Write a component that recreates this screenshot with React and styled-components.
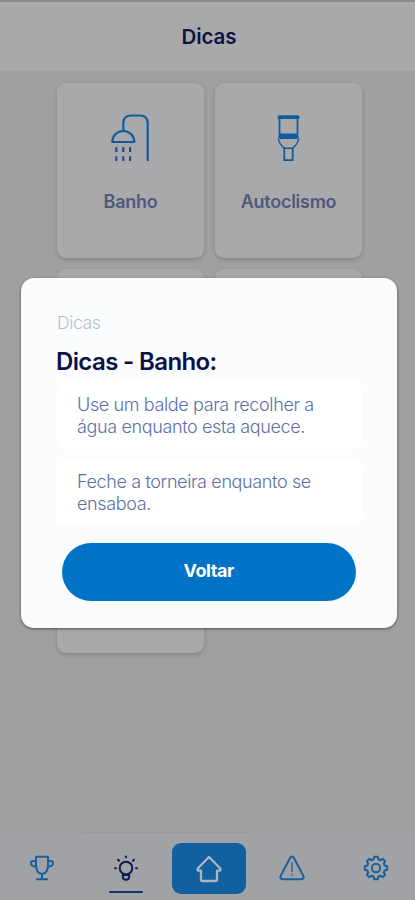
import React from "react";
import styled, { createGlobalStyle } from "styled-components";

const GlobalStyle = createGlobalStyle`
  * { box-sizing: border-box; }
  body { margin: 0; background: #a0a0a2; }
  button { font: inherit; border: 0; padding: 0; background: none; }
`;

const Screen = styled.div`
  position: relative;
  display: flex;
  flex-direction: column;
  width: 415px;
  height: 900px;
  overflow: hidden;
  background: #a0a0a2;
  font-family: Inter, "Liberation Sans", sans-serif;
`;

const Header = styled.header`
  display: flex;
  align-items: center;
  justify-content: center;
  height: 71px;
  flex: none;
  background: #a9a9ab;
  border-top: 2px solid #89898a;
  padding-left: 3px;
`;

const HeaderTitle = styled.h1`
  margin: 0;
  font-size: 20.5px;
  line-height: 24px;
  font-weight: 600;
  letter-spacing: -0.1px;
  color: #0b1445;
`;

const Grid = styled.main`
  flex: 1;
  display: grid;
  grid-template-columns: 147px 147px;
  grid-template-rows: 175px 175px 198px;
  gap: 11px;
  padding: 12px 0 0 57px;
`;

const Card = styled.section`
  display: flex;
  flex-direction: column;
  align-items: center;
  border-radius: 9px;
  background: #a9a9ab;
  box-shadow: 0 2px 4px rgba(0, 0, 0, 0.18);
  padding-top: 28px;
`;

const CardLabel = styled.span`
  margin-top: 27px;
  font-size: 18px;
  line-height: 28px;
  font-weight: 600;
  letter-spacing: -0.27px;
  color: #50587d;
`;

const Nav = styled.nav`
  position: relative;
  display: grid;
  grid-template-columns: repeat(5, 83.4px);
  height: 67px;
  flex: none;
  padding-left: 0.6px;
  background: #a1a2a6;
`;

const NavRule = styled.div`
  position: absolute;
  top: -1px;
  left: 83px;
  width: 164px;
  height: 1px;
  background: #9a9a9e;
`;

const NavItem = styled.button`
  display: flex;
  flex-direction: column;
  align-items: center;
  padding-top: ${(p) => (p.$home ? "10px" : "21.5px")};
`;

const ActiveBar = styled.div`
  width: 34px;
  height: 2px;
  margin-top: 10.5px;
  border-radius: 1px;
  background: #123766;
`;

const HomeTile = styled.span`
  display: flex;
  align-items: center;
  justify-content: center;
  width: 74px;
  height: 51px;
  border-radius: 9px;
  background: #12609f;
`;

const Dialog = styled.div`
  position: absolute;
  left: 21px;
  top: 278px;
  width: 376px;
  height: 350px;
  display: flex;
  flex-direction: column;
  padding: 34px 35px 0 36px;
  border-radius: 13px;
  background: #fafcfe;
  box-shadow: 0 1px 3px rgba(0, 0, 0, 0.5);
`;

const Eyebrow = styled.div`
  font-size: 17.8px;
  line-height: 22px;
  font-weight: 300;
  letter-spacing: -0.5px;
  color: #b8bdd1;
`;

const DialogTitle = styled.h2`
  margin: 12px 0 5px -1px;
  font-size: 24px;
  line-height: 31px;
  height: 30px;
  font-weight: 600;
  letter-spacing: -0.62px;
  color: #0b1045;
`;

const Tips = styled.div`
  display: flex;
  flex-direction: column;
  gap: 11px;
`;

const Tip = styled.p`
  margin: 0;
  height: ${(p) => p.$height};
  padding: ${(p) => p.$top} 0 0 20px;
  border-radius: 9px;
  background: #ffffff;
  font-size: 18px;
  line-height: 22px;
  font-weight: 300;
  letter-spacing: -0.37px;
  color: #5c70a6;
  white-space: nowrap;
`;

const BackButton = styled.button`
  && {
    margin: 17px 6px 0 4.5px;
    height: 57.5px;
    flex: none;
    border-radius: 29px;
    background: #0173c6;
    color: #ffffff;
    font-size: 18px;
    line-height: 22px;
    padding-bottom: 1px;
    font-weight: 700;
    letter-spacing: -0.4px;
  }
`;

const Shower = () => (
  <svg width="40" height="50" viewBox="0 0 40 50" fill="none" stroke="#125c9c" strokeWidth="2.2">
    <path d="M12.3 19.5V12.5Q12.3 4.5 20.3 4.5H29Q36.7 4.5 36.7 12.5V50" />
    <path d="M1.3 31C1.3 24.5 6.3 20 12.3 20S23.3 24.5 23.3 31Z" strokeLinejoin="round" />
    <path d="M5.3 36V41M12.3 36V41M19.1 36V41M5.3 45.3V50M12.3 45.3V50M19.1 45.3V50" stroke="#204f89" />
  </svg>
);

const Toilet = () => (
  <svg width="24" height="50" viewBox="0 0 24 50" fill="none" stroke="#125c9c" strokeWidth="1.8">
    <rect x="0.5" y="4.2" width="22" height="3.8" rx="1.5" fill="#125c9c" stroke="none" />
    <path d="M2.5 7V23M20.5 7V23" />
    <path d="M2.5 22.5H20.5L22 25.5L20 28H3L1 25.5Z" fill="#125c9c" stroke="none" />
    <path d="M1.4 27C1.7 33 5.2 35.6 8.1 37.3H14.9C17.8 35.6 21.3 33 21.6 27" strokeWidth="1.4" />
    <path d="M7.3 37V49.2H15.7V37" />
  </svg>
);

const iconProps = {
  width: 26,
  height: 26,
  viewBox: "0 0 26 26",
  fill: "none",
  stroke: "#185f9d",
  strokeWidth: 2,
  strokeLinecap: "round",
  strokeLinejoin: "round",
};

const Trophy = () => (
  <svg {...iconProps}>
    <path d="M7 1.8H19V10.5C19 15.5 16.5 18.3 13 19C9.5 18.3 7 15.5 7 10.5ZM7 6H4Q2 6 2 8C2 10.4 4.4 11.6 7.5 11.6M19 6H22Q24 6 24 8C24 10.4 21.6 11.6 18.5 11.6M13 19V24M7.8 24.2H18.2" />
  </svg>
);

const Bulb = () => (
  <svg {...iconProps} stroke="#101c50">
    <circle cx="13" cy="13" r="6.3" />
    <path d="M9.8 19.2V21.8Q9.8 24.8 13 24.8T16.2 21.8V19.2M10.5 20H15.5M13 1.5V2.2M5 4.8L6 5.8M21 4.8L20 5.8M2 13.2H3M23 13.2H24" />
  </svg>
);

const Home = () => (
  <svg width="28" height="28" viewBox="0 0 28 28" fill="none" stroke="#aeb4be" strokeWidth="2.3" strokeLinejoin="round" strokeLinecap="round">
    <path d="M14 2L25.3 13.5V15.6H22V24.3Q22 26 20.3 26H7.7Q6 26 6 24.3V15.6H2.7V13.5Z" />
  </svg>
);

const Warning = () => (
  <svg {...iconProps}>
    <path d="M11.2 2.8Q13 .4 14.8 2.8L24.2 20.6Q25.5 24.2 22.5 24.2H3.5Q.5 24.2 1.8 20.6Z" />
    <path d="M13 8V16.2M13 19.7V20" stroke="#536f92" />
  </svg>
);

const Gear = () => (
  <svg {...iconProps}>
    <path d="M11.2 1.8H14.8L15.5 4.4L17.5 5.2L19.8 3.9L22.1 6.2L20.8 8.5L21.6 10.5L24.2 11.2V14.8L21.6 15.5L20.8 17.5L22.1 19.8L19.8 22.1L17.5 20.8L15.5 21.6L14.8 24.2H11.2L10.5 21.6L8.5 20.8L6.2 22.1L3.9 19.8L5.2 17.5L4.4 15.5L1.8 14.8V11.2L4.4 10.5L5.2 8.5L3.9 6.2L6.2 3.9L8.5 5.2L10.5 4.4Z" />
    <circle cx="13" cy="13" r="4.2" />
  </svg>
);

export default function App() {
  return (
    <>
      <GlobalStyle />
      <Screen>
        <Header>
          <HeaderTitle>Dicas</HeaderTitle>
        </Header>
        <Grid>
          <Card>
            <Shower />
            <CardLabel>Banho</CardLabel>
          </Card>
          <Card>
            <Toilet />
            <CardLabel>Autoclismo</CardLabel>
          </Card>
          <Card />
          <Card />
          <Card />
        </Grid>
        <Nav>
          <NavRule />
          <NavItem aria-label="Troféus"><Trophy /></NavItem>
          <NavItem aria-label="Dicas">
            <Bulb />
            <ActiveBar />
          </NavItem>
          <NavItem $home aria-label="Início">
            <HomeTile><Home /></HomeTile>
          </NavItem>
          <NavItem aria-label="Alertas"><Warning /></NavItem>
          <NavItem aria-label="Definições"><Gear /></NavItem>
        </Nav>
        <Dialog role="dialog">
          <Eyebrow>Dicas</Eyebrow>
          <DialogTitle>Dicas - Banho:</DialogTitle>
          <Tips>
            <Tip $height="68px" $top="12.5px">
              Use um balde para recolher a<br />água enquanto esta aquece.
            </Tip>
            <Tip $height="66px" $top="11px">
              Feche a torneira enquanto se<br />ensaboa.
            </Tip>
          </Tips>
          <BackButton>Voltar</BackButton>
        </Dialog>
      </Screen>
    </>
  );
}
